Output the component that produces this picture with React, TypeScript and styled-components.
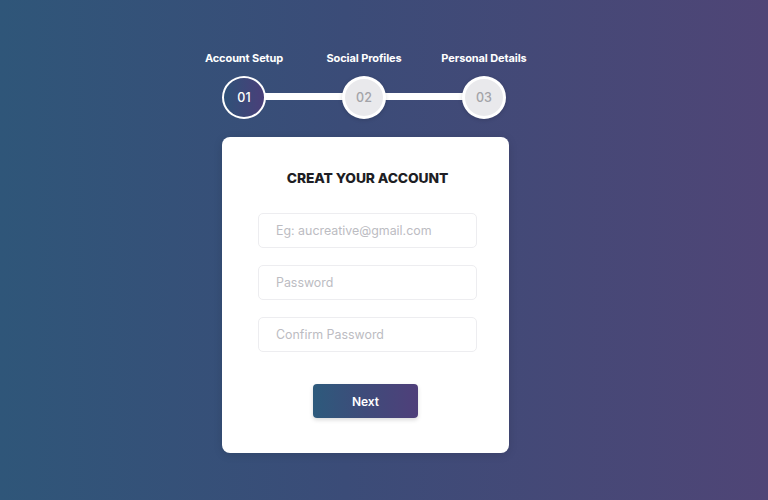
import React from "react";
import styled, { createGlobalStyle } from "styled-components";

const Global = createGlobalStyle`
  html, body { margin: 0; padding: 0; }
  body {
    width: 768px;
    height: 500px;
    overflow: hidden;
    font-family: "Inter", "Lato", "Liberation Sans", sans-serif;
    background: linear-gradient(90deg, #2f5679 0%, #3b4c78 45%, #4f4576 100%);
  }
`;

const Page = styled.div`
  width: 768px;
  height: 500px;
  box-sizing: border-box;
  padding: 49px 0 0 222px;
  display: flex;
  flex-direction: column;
`;

const Column = styled.div`
  width: 287px;
  display: flex;
  flex-direction: column;
`;

const Stepper = styled.div`
  position: relative;
  width: 284px;
  height: 70px;
  display: flex;
  justify-content: space-between;
`;

const Track = styled.div`
  position: absolute;
  left: 22px;
  right: 22px;
  top: 44px;
  height: 7px;
  background: #fff;
`;

const Step = styled.div`
  position: relative;
  width: 44px;
  display: flex;
  flex-direction: column;
  align-items: center;
`;

const Label = styled.div`
  white-space: nowrap;
  font-size: 11px;
  font-weight: 700;
  color: #fff;
  height: 18px;
  line-height: 18px;
  letter-spacing: -0.1px;
  margin-bottom: 9px;
`;

const Circle = styled.div<{ $active?: boolean }>`
  width: 44px;
  height: 44px;
  box-sizing: border-box;
  border-radius: 50%;
  border: ${(p) => (p.$active ? "2px" : "3px")} solid #fff;
  background: ${(p) =>
    p.$active ? "linear-gradient(90deg, #2f5178, #4a3f79)" : "#e9e9ec"};
  color: ${(p) => (p.$active ? "#fff" : "#a3a3a8")};
  display: flex;
  align-items: center;
  justify-content: center;
  font-size: 12.5px;
  font-weight: 500;
  box-shadow: ${(p) => (p.$active ? "none" : "0 1px 4px rgba(0,0,0,0.15)")};
`;

const Card = styled.div`
  margin-top: 18px;
  width: 287px;
  height: 316px;
  box-sizing: border-box;
  background: #fff;
  border-radius: 8px;
  padding: 32px 32px 0 36px;
  display: flex;
  flex-direction: column;
  align-items: center;
  box-shadow: 0 2px 10px rgba(0,0,0,0.12);
`;

const Title = styled.h1`
  margin: 0 0 26px;
  font-size: 13.8px;
  font-weight: 800;
  color: #1e1e24;
  letter-spacing: -0.1px;
  line-height: 18px;
`;

const Fields = styled.div`
  width: 219px;
  display: flex;
  flex-direction: column;
  gap: 17px;
`;

const Input = styled.input`
  width: 100%;
  height: 35px;
  box-sizing: border-box;
  border: 1px solid #ededf0;
  border-radius: 5px;
  padding: 0 17px;
  font-family: inherit;
  font-size: 12.4px;
  color: #333;
  outline: none;
  &::placeholder { color: #bcbcc2; }
`;

const Button = styled.button`
  margin: 32px 4px 0 0;
  width: 105px;
  height: 34px;
  border: none;
  border-radius: 4px;
  background: linear-gradient(90deg, #2d5a7c 0%, #3f4b7a 50%, #4f3f7a 100%);
  color: #fff;
  font-family: inherit;
  font-size: 12px;
  font-weight: 600;
  box-shadow: 0 2px 4px rgba(0,0,0,0.15);
  cursor: pointer;
`;

const steps = [
  { label: "Account Setup", num: "01", active: true },
  { label: "Social Profiles", num: "02" },
  { label: "Personal Details", num: "03" },
];

export default function App() {
  return (
    <>
      <Global />
      <Page>
        <Column>
          <Stepper>
            <Track />
            {steps.map((s) => (
              <Step key={s.num}>
                <Label>{s.label}</Label>
                <Circle $active={s.active}>{s.num}</Circle>
              </Step>
            ))}
          </Stepper>
          <Card>
            <Title>CREAT YOUR ACCOUNT</Title>
            <Fields>
              <Input placeholder="Eg: aucreative@gmail.com" />
              <Input type="password" placeholder="Password" />
              <Input type="password" placeholder="Confirm Password" />
            </Fields>
            <Button>Next</Button>
          </Card>
        </Column>
      </Page>
    </>
  );
}
